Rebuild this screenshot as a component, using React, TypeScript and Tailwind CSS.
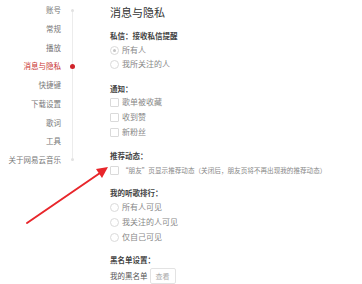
import React from "react";

const font = { fontFamily: '"Noto Sans CJK SC", "Noto Sans", sans-serif' };

const navItems = ["账号", "常规", "播放", "消息与隐私", "快捷键", "下载设置", "歌词", "工具", "关于网易云音乐"];

function Radio({ label, checked, cls }: { label: string; checked?: boolean; cls: string }) {
  return (
    <div className={`flex items-center h-[14px] ${cls}`}>
      <span className="w-[9px] h-[9px] rounded-full border border-[#dadada] flex items-center justify-center">
        {checked && <span className="w-[3px] h-[3px] rounded-full bg-[#c4c4c4]" />}
      </span>
      <span className="ml-[3px] text-[8px] leading-[14px] text-[#888] whitespace-nowrap">{label}</span>
    </div>
  );
}

function Check({ label, cls, small }: { label: string; cls: string; small?: boolean }) {
  return (
    <div className={`flex items-center h-[14px] ${cls}`}>
      <span className="w-[9px] h-[9px] shrink-0 border border-[#dadada] rounded-[1px]" />
      <span className={`ml-[3px] leading-[14px] text-[#888] whitespace-nowrap ${small ? "text-[6.6px]" : "text-[8px]"}`}>{label}</span>
    </div>
  );
}

function Label({ text, cls }: { text: string; cls: string }) {
  return <div className={`h-[14px] leading-[14px] text-[7.5px] font-bold text-[#444] ${cls}`}>{text}</div>;
}

export default function App() {
  return (
    <div className="w-[362px] h-[284px] bg-white relative overflow-hidden flex" style={font}>
      {/* Nav */}
      <div className="w-[61px] flex flex-col items-end pt-[1px]">
        {navItems.map((n, i) => (
          <div
            key={n}
            className={`h-[18.75px] leading-[18.75px] text-[7.5px] whitespace-nowrap ${i === 3 ? "text-[#c8312e]" : "text-[#777]"}`}
          >
            {n}
          </div>
        ))}
      </div>
      {/* Timeline */}
      <div className="w-[22px] flex justify-center">
        <div className="relative w-[5px] mt-[9px] h-[152px] flex flex-col items-center">
          <div className="w-px h-full bg-[#ececec]" />
          <span className="absolute top-0 w-[3px] h-[3px] rounded-full bg-[#e2e2e2]" />
          <span className="absolute top-[55px] w-[5px] h-[5px] rounded-full bg-[#d0232a]" />
          <span className="absolute bottom-0 w-[3px] h-[3px] rounded-full bg-[#e2e2e2]" />
        </div>
      </div>
      {/* Content */}
      <div className="flex flex-col pl-[27px]">
        <div className="mt-[4px] h-[16px] leading-[16px] text-[11px] text-[#333]">消息与隐私</div>
        <Label text="私信：接收私信提醒" cls="mt-[9px]" />
        <Radio label="所有人" checked cls="" />
        <Radio label="我所关注的人" cls="" />
        <Label text="通知：" cls="mt-[11px]" />
        <Check label="歌单被收藏" cls="mt-[-1px]" />
        <Check label="收到赞" cls="mt-[1px]" />
        <Check label="新粉丝" cls="mt-[1px]" />
        <Label text="推荐动态：" cls="mt-[10px]" />
        <Check small label="“朋友”页显示推荐动态（关闭后，朋友页将不再出现我的推荐动态）" cls="" />
        <Label text="我的听歌排行：" cls="mt-[9px]" />
        <Radio label="所有人可见" cls="" />
        <Radio label="我关注的人可见" cls="mt-[1px]" />
        <Radio label="仅自己可见" cls="mt-[1px]" />
        <Label text="黑名单设置：" cls="mt-[9px]" />
        <div className="mt-[1px] flex items-center h-[16px]">
          <span className="text-[7.5px] text-[#555]">我的黑名单</span>
          <span className="ml-[2px] h-[16px] px-[5px] border border-[#e3e3e3] rounded-[2px] text-[7px] leading-[14px] text-[#aaa]">查看</span>
        </div>
      </div>
      {/* Annotation arrow */}
      <svg className="absolute left-0 top-0" width="362" height="284" viewBox="0 0 362 284">
        <line x1="27" y1="223" x2="100" y2="173" stroke="#e8262b" strokeWidth="2" strokeLinecap="round" />
        <polygon points="108,167 96,169 102,178" fill="#e8262b" />
      </svg>
    </div>
  );
}
